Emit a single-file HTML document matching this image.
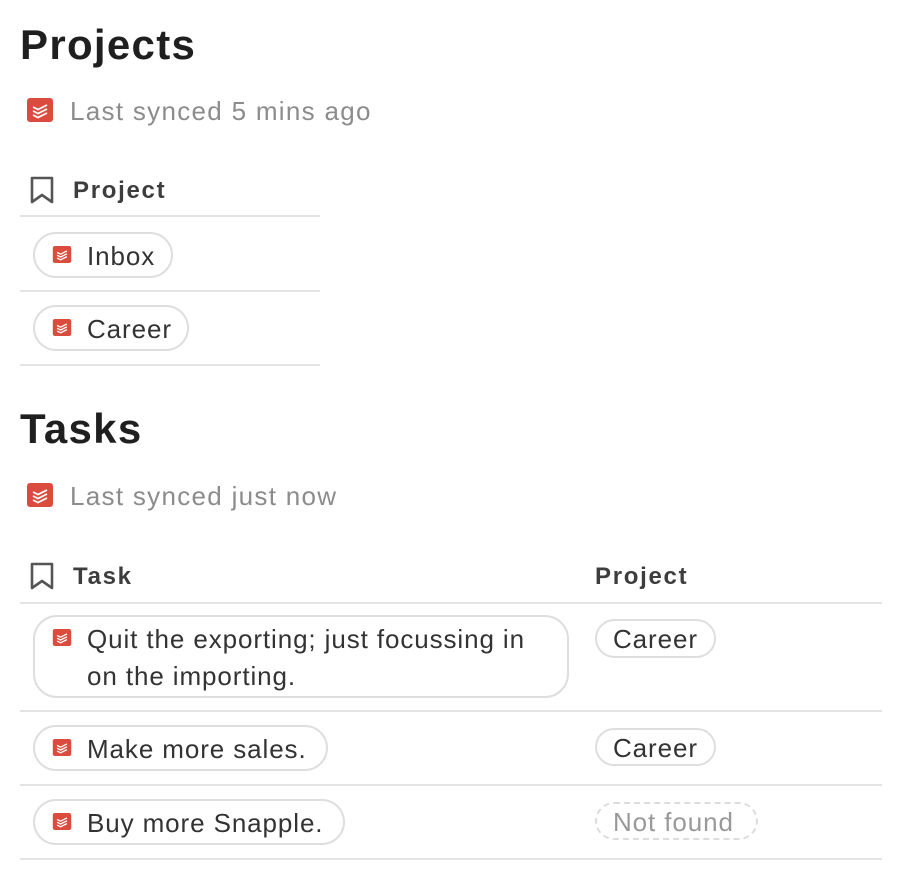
<!DOCTYPE html>
<html><head><meta charset="utf-8"><style>
body{margin:0;width:904px;height:874px;background:#fff;font-family:"Liberation Sans",sans-serif;color:#37352f;position:relative;overflow:hidden}
.a{position:absolute;white-space:nowrap}
h1{position:absolute;margin:0;font-size:42px;font-weight:bold;color:#1f1f1f;left:20px;letter-spacing:1.3px}
.sync{font-size:26px;color:#8c8c8c;left:70px;letter-spacing:1.3px}
.hd{font-size:24px;font-weight:bold;color:#3d3d3d;letter-spacing:1.7px}
.line{position:absolute;height:2px;background:#e3e3e3}
.pill{position:absolute;border:2px solid #dedede;border-radius:24px;box-sizing:border-box;font-size:26px;color:#333;letter-spacing:0.9px}
.dash{border:2px dashed #dcdcdc;color:#999}
.ti{position:absolute;width:20px;height:17px}
</style></head><body>
<svg width="0" height="0" style="position:absolute"><defs>
<symbol id="td" viewBox="0 0 26 24"><rect width="26" height="24" rx="3" fill="#dc4c3e"/><path d="M6 9l5 2.5 9-4.5M6 13l5 2.5 9-4.5M6 17l5 2.5 9-4.5" stroke="#fff" stroke-width="1.8" fill="none"/></symbol>
<symbol id="bm" viewBox="0 0 24 28"><path d="M2 2h20v24l-10-7-10 7z" fill="none" stroke="#555" stroke-width="2.6" stroke-linejoin="round"/></symbol>
</defs></svg>

<h1 style="top:21px">Projects</h1>
<svg class="a" style="left:27px;top:98px" width="26" height="24"><use href="#td"/></svg>
<div class="a sync" style="top:96px">Last synced 5 mins ago</div>
<svg class="a" style="left:30px;top:176px" width="24" height="28"><use href="#bm"/></svg>
<div class="a hd" style="left:73px;top:177px">Project</div>
<div class="line" style="left:20px;top:215px;width:300px"></div>
<div class="pill" style="left:33px;top:232px;width:140px;height:46px"><svg class="ti" style="left:17px;top:12px"><use href="#td"/></svg><span class="a" style="left:52px;top:7px">Inbox</span></div>
<div class="line" style="left:20px;top:290px;width:300px"></div>
<div class="pill" style="left:33px;top:305px;width:156px;height:46px"><svg class="ti" style="left:17px;top:12px"><use href="#td"/></svg><span class="a" style="left:52px;top:7px">Career</span></div>
<div class="line" style="left:20px;top:364px;width:300px"></div>

<h1 style="top:405px">Tasks</h1>
<svg class="a" style="left:27px;top:483px" width="26" height="24"><use href="#td"/></svg>
<div class="a sync" style="top:481px">Last synced just now</div>
<svg class="a" style="left:30px;top:562px" width="24" height="28"><use href="#bm"/></svg>
<div class="a hd" style="left:73px;top:563px">Task</div>
<div class="a hd" style="left:595px;top:563px">Project</div>
<div class="line" style="left:20px;top:602px;width:862px"></div>
<div class="pill" style="left:33px;top:615px;width:536px;height:83px"><svg class="ti" style="left:17px;top:12px"><use href="#td"/></svg><span class="a" style="left:52px;line-height:37px;top:4px;white-space:normal;width:465px">Quit the exporting; just focussing in on the importing.</span></div>
<div class="pill" style="left:595px;top:619px;width:121px;height:39px"><span class="a" style="left:16px;top:3px">Career</span></div>
<div class="line" style="left:20px;top:710px;width:862px"></div>
<div class="pill" style="left:33px;top:725px;width:295px;height:46px"><svg class="ti" style="left:17px;top:12px"><use href="#td"/></svg><span class="a" style="left:52px;top:7px">Make more sales.</span></div>
<div class="pill" style="left:595px;top:728px;width:121px;height:38px"><span class="a" style="left:16px;top:3px">Career</span></div>
<div class="line" style="left:20px;top:784px;width:862px"></div>
<div class="pill" style="left:33px;top:799px;width:312px;height:46px"><svg class="ti" style="left:17px;top:12px"><use href="#td"/></svg><span class="a" style="left:52px;top:7px">Buy more Snapple.</span></div>
<div class="pill dash" style="left:595px;top:802px;width:163px;height:38px"><span class="a" style="left:16px;top:3px">Not found</span></div>
<div class="line" style="left:20px;top:858px;width:862px"></div>
</body></html>
